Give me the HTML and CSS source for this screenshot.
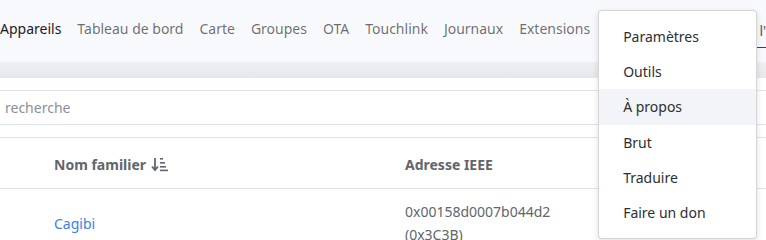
FILE: index.html
```html
<!DOCTYPE html>
<html lang="fr">
<head>
    <meta charset="UTF-8">
    <meta name="viewport" content="width=device-width, initial-scale=1.0">
    <title>Appareils</title>
    <link rel="stylesheet" href="styles.css">
</head>
<body>
    <nav class="navbar">
        <ul class="nav-links">
            <li><a class="active" href="#">Appareils</a></li>
            <li><a href="#">Tableau de bord</a></li>
            <li><a href="#">Carte</a></li>
            <li><a href="#">Groupes</a></li>
            <li><a href="#">OTA</a></li>
            <li><a href="#">Touchlink</a></li>
            <li><a href="#">Journaux</a></li>
            <li><a href="#">Extensions</a></li>
            <li class="menu-holder">
                <a href="#">Paramètres</a>
                <div class="dropdown">
                    <a href="#">Paramètres</a>
                    <a href="#">Outils</a>
                    <a class="hover" href="#">À propos</a>
                    <a href="#">Brut</a>
                    <a href="#">Traduire</a>
                    <a href="#">Faire un don</a>
                </div>
            </li>
        </ul>
        <button class="join-btn">Autoriser l'appairage (Tous)</button>
    </nav>
    <div class="band"></div>
    <main class="content">
        <input class="search" type="text" placeholder="recherche">
        <table class="devices">
            <thead>
                <tr>
                    <th class="col-pic"></th>
                    <th class="col-name">
                        Nom familier
                        <svg class="sort" width="17" height="15" viewBox="0 0 17 15">
                            <path d="M4 1v12M1 9.5l3 3.5 3-3.5" fill="none" stroke="#5f666d" stroke-width="1.8"/>
                            <rect x="9" y="1" width="3" height="1.6" fill="#5f666d"/>
                            <rect x="9" y="5" width="5" height="1.6" fill="#5f666d"/>
                            <rect x="9" y="9" width="6" height="1.6" fill="#5f666d"/>
                            <rect x="9" y="12.6" width="8" height="1.6" fill="#5f666d"/>
                        </svg>
                    </th>
                    <th class="col-ieee">Adresse IEEE</th>
                </tr>
            </thead>
            <tbody>
                <tr>
                    <td class="col-pic"></td>
                    <td class="col-name"><a href="#">Cagibi</a></td>
                    <td class="col-ieee"><span>0x00158d0007b044d2</span><span>(0x3C3B)</span></td>
                </tr>
            </tbody>
        </table>
    </main>
</body>
</html>
```

FILE: styles.css
```css
body {
    margin: 0;
    font-family: "Noto Sans", "Open Sans", sans-serif;
    font-size: 14px;
    color: #212529;
    background: #fff;
    overflow: hidden;
}
a {
    text-decoration: none;
}
.navbar {
    display: flex;
    align-items: center;
    box-sizing: border-box;
    height: 62px;
    padding-bottom: 4px;
    background-color: #f8f9fc;
    white-space: nowrap;
}
.nav-links {
    display: flex;
    margin: 0;
    padding: 0;
    list-style: none;
}
.nav-links > li > a {
    display: block;
    padding: 0 8px;
    line-height: 22px;
    color: rgba(0, 0, 0, 0.58);
}
.nav-links > li:first-child > a {
    padding-left: 0;
}
.nav-links > li > a.active {
    color: #1d2024;
}
.menu-holder {
    position: relative;
}
.menu-holder > a {
    visibility: hidden;
}
.dropdown {
    position: absolute;
    top: -8px;
    left: 0;
    width: 157px;
    padding: 8px 0;
    background: #fff;
    border: 1px solid rgba(0, 0, 0, 0.16);
    border-radius: 4px;
    box-shadow: 0 2px 6px rgba(0, 0, 0, 0.12);
    z-index: 10;
}
.dropdown a {
    display: block;
    padding: 6px 24px;
    line-height: 23.2px;
    color: #2b2f33;
}
.dropdown a.hover {
    background-color: #f2f4f8;
}
.join-btn {
    margin-left: 1px;
    margin-top: 4px;
    height: 34px;
    padding: 0 4px;
    font: inherit;
    color: #555;
    background: transparent;
    border: none;
    border-bottom: 1px solid #444;
}
.band {
    height: 16px;
    background: linear-gradient(#eef0f3, #e5e7ea);
}
.content {
    padding-top: 12px;
}
.search {
    display: block;
    box-sizing: border-box;
    width: 100%;
    height: 35px;
    margin: 0;
    padding: 0 5px;
    font: inherit;
    border: none;
    border-top: 1px solid #dbe3ec;
    border-bottom: 1px solid #dbe3ec;
    outline: none;
}
.search::placeholder {
    color: #8c9096;
}
.devices {
    width: 100%;
    margin-top: 12px;
    border-collapse: collapse;
    table-layout: fixed;
}
.devices th, .devices td {
    padding: 0 12px;
    text-align: left;
    border-top: 1px solid #dbe3ec;
}
.devices th {
    height: 48px;
    padding-top: 2px;
    font-weight: bold;
    color: #5f666d;
}
.devices td {
    height: 68px;
    vertical-align: middle;
}
.col-pic {
    width: 18px;
}
.col-name {
    width: 327px;
}
.devices td.col-name a {
    color: #3b7fe6;
}
.devices td.col-ieee {
    color: #60666c;
    line-height: 23px;
}
.col-ieee span {
    display: block;
}
.sort {
    vertical-align: -2px;
    margin-left: 1px;
}
```
